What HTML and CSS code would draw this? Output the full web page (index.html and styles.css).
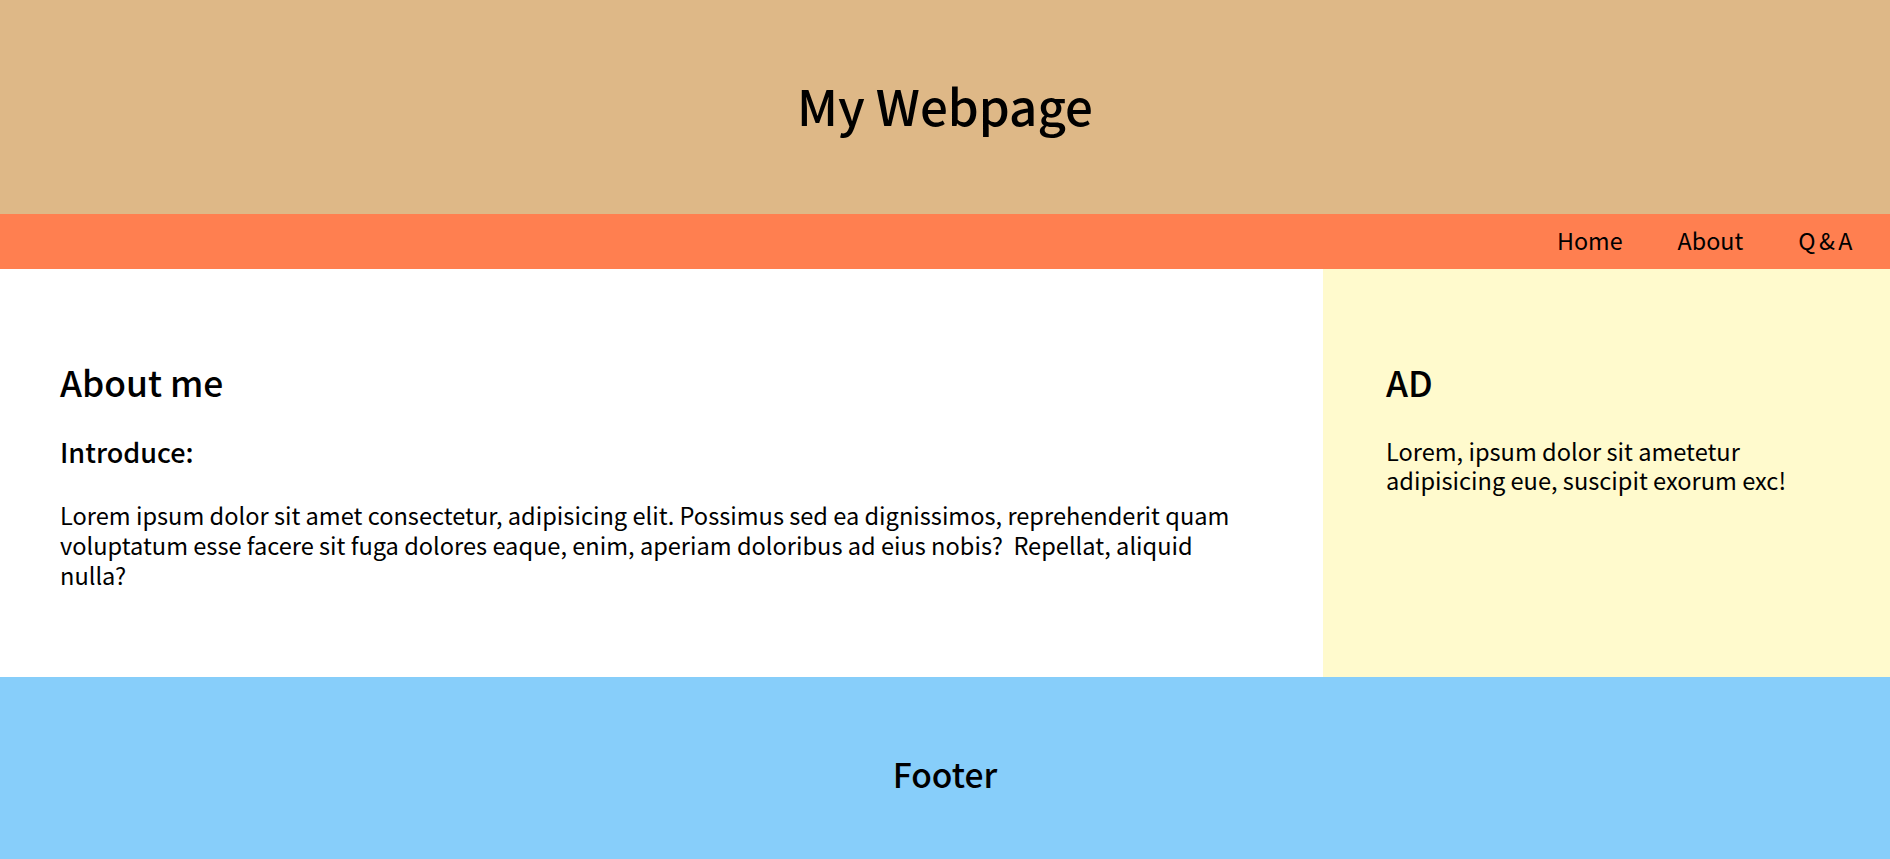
FILE: index.html
```html
<!DOCTYPE html>
<html>
<head>
<meta charset="utf-8" />
<title>My Webpage</title>
<link rel="stylesheet" href="styles.css">
</head>

<body>
<header class="top">
	<h1>My Webpage</h1>
</header>
<nav class="menu">
	<ul>
		<li><a href="#">Home</a></li>
		<li><a href="#">About</a></li>
		<li><a href="#" class="qa">Q&amp;A</a></li>
	</ul>
</nav>
<div class="wrap">
	<section class="content">
		<h2>About me</h2>
		<h3>Introduce:</h3>
		<p>Lorem ipsum dolor sit amet consectetur, adipisicing elit. Possimus sed ea dignissimos, reprehenderit quam voluptatum esse facere sit fuga dolores eaque, enim, aperiam doloribus ad eius nobis? &nbsp;Repellat, aliquid nulla?</p>
	</section>
	<aside class="side">
		<h2>AD</h2>
		<p>Lorem, ipsum dolor sit ametetur adipisicing eue, suscipit exorum exc!</p>
	</aside>
</div>
<footer class="bottom">
	<h2>Footer</h2>
</footer>
</body>
</html>
```

FILE: styles.css
```css
*{margin:0;padding:0;box-sizing:border-box;}
body{
	font-family:"Noto Sans CJK KR","Noto Sans",sans-serif;
	color:#000;
	background:#fff;
}
li{list-style:none;}
a{color:#000;text-decoration:none;}
h1,h2,h3{font-weight:500;}

.top{
	height:214px;
	padding-top:80px;
	background:#DEB887;
	text-align:center;
}
.top h1{
	font-size:49.3px;
	line-height:50px;
}

.menu{
	height:55px;
	background:#FF7F50;
}
.menu ul{
	display:flex;
	justify-content:flex-end;
	gap:55px;
	padding-right:34px;
}
.menu a{
	display:block;
	font-size:23.3px;
	line-height:53px;
}
.menu .qa{letter-spacing:3.5px;}

.wrap{
	display:flex;
}
.content{
	width:70%;
	padding:89px 60px 87px;
}
.side{
	width:30%;
	padding:89px 60px 0 63px;
	background:#FFFACD;
}
.wrap h2{
	font-size:35.4px;
	line-height:48px;
}
.wrap h3{
	margin-top:28px;
	font-size:27px;
	line-height:36px;
}
.wrap p{
	font-size:23.6px;
	line-height:30px;
}
.content p{margin-top:30px;}
.side p{margin-top:31px;line-height:28.5px;}

.bottom{
	height:182px;
	padding-top:79px;
	background:#87CEFA;
	text-align:center;
}
.bottom h2{
	font-size:33.6px;
	line-height:36px;
}
```
